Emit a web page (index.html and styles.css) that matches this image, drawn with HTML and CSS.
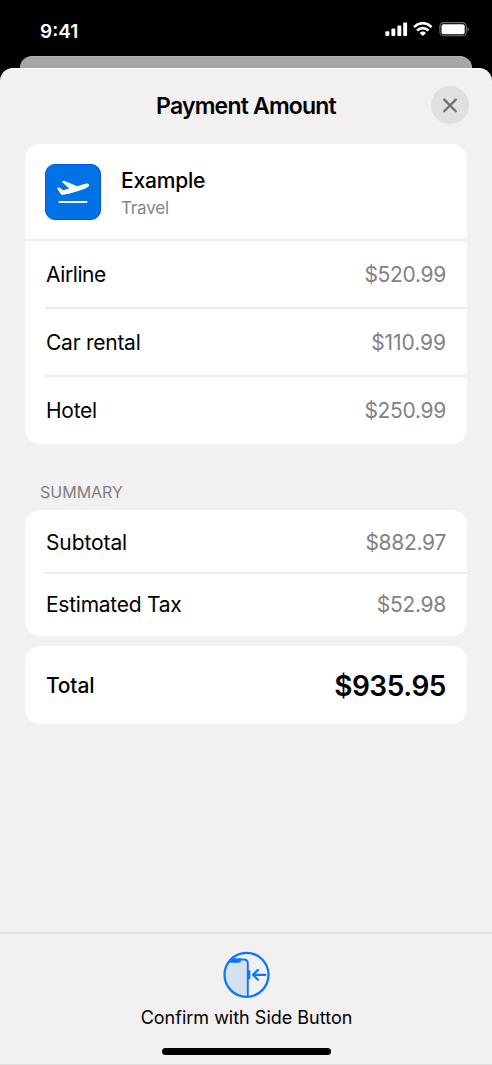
FILE: index.html
```html
<!DOCTYPE html>
<html lang="en">
<head>
<meta charset="utf-8">
<title>Payment Amount</title>
<link rel="stylesheet" href="styles.css">
</head>
<body>
<div class="phone">
  <header class="status">
    <span class="time">9:41</span>
    <svg class="indicators" width="84" height="16" viewBox="0 0 84 16">
      <g fill="#fff">
        <rect x="0.4" y="9.2" width="3.9" height="4.8" rx="1"/>
        <rect x="6.4" y="6.4" width="3.9" height="7.6" rx="1"/>
        <rect x="12.4" y="3.5" width="3.9" height="10.5" rx="1"/>
        <rect x="18.2" y="0.4" width="3.9" height="13.6" rx="1"/>
        <path d="M37.8 14 L34.6 10.900 Q37.8 8.300 41 10.900 Z"/>
      </g>
      <g fill="none" stroke="#fff" stroke-width="2.6">
        <path d="M29 4.9 Q37.8 -2.6 46.6 4.9"/>
        <path d="M32 8.5 Q37.8 3.6 43.6 8.5"/>
      </g>
      <rect x="54.9" y="0.6" width="26.4" height="13.2" rx="3.8" fill="none" stroke="#707070" stroke-width="1.1"/>
      <rect x="56.5" y="2.2" width="23.2" height="10" rx="2" fill="#fff"/>
      <path d="M82.5 5 Q84 5.7 84 7.2 Q84 8.700 82.500 9.400 Z" fill="#707070"/>
    </svg>
  </header>
  <div class="back-sheet"></div>
  <main class="sheet">
    <div class="titlebar">
      <h1 class="title">Payment Amount</h1>
      <button class="close" aria-label="Close">
        <svg width="38" height="38" viewBox="0 0 38 38"><path d="M13.2 13.600 L24.800 25.200 M24.800 13.600 L13.200 25.200" stroke="#707073" stroke-width="2.300" stroke-linecap="round"/></svg>
      </button>
    </div>
    <section class="card">
      <div class="merchant">
        <svg class="logo" width="56" height="56" viewBox="0 0 56 56">
          <rect x="0.5" y="0.5" width="55" height="55" rx="9.500" fill="#0171e6" stroke="#0058e0"/>
          <path d="M12.300 24.700 Q12 23.800 12.900 23.700 L14.400 23.500 L18.300 26.200 L24.200 24.600 L17.300 18.300 Q16.700 17.500 17.700 17.100 L19.400 16.800 L32.200 22.300 L39.200 19.900 Q43.300 18.700 44 20.600 Q44.600 22.800 40.200 24.400 C33 27 25.200 29.500 18.200 30.800 Q16.700 31 15.800 29.900 Z" fill="#fff"/>
          <path d="M14.500 38 H41.500" stroke="#fff" stroke-width="2" stroke-linecap="round"/>
        </svg>
        <div class="names">
          <div class="name">Example</div>
          <div class="kind">Travel</div>
        </div>
      </div>
      <div class="row first"><span class="tight">Airline</span><span class="price">$520.99</span></div>
      <div class="row"><span>Car rental</span><span class="price ones">$110.99</span></div>
      <div class="row"><span>Hotel</span><span class="price">$250.99</span></div>
    </section>
    <h2 class="section-title">SUMMARY</h2>
    <section class="card summary">
      <div class="row"><span class="wide">Subtotal</span><span class="price">$882.97</span></div>
      <div class="row"><span>Estimated Tax</span><span class="price">$52.98</span></div>
    </section>
    <section class="card total">
      <span class="total-label">Total</span><span class="amount">$935.95</span>
    </section>
    <footer class="confirm">
      <svg class="side-icon" width="48" height="48" viewBox="0 0 48 48">
        <defs><clipPath id="ring"><circle cx="23.500" cy="23.800" r="22"/></clipPath></defs>
        <g clip-path="url(#ring)">
          <path d="M0 8.500 H21 Q24.800 8.500 24.800 12.500 V48 H0 Z" fill="#d5e1f1" stroke="#0a76ff" stroke-width="1.900"/>
          <path d="M0 7.600 H18 V9.200 Q18 11.800 15.700 11.800 H0 Z" fill="#0a76ff"/>
        </g>
        <rect x="24.800" y="19.300" width="2.600" height="9" rx="0.800" fill="#0a76ff"/>
        <path d="M42.300 23.800 H30.200 M35 18.900 L30 23.800 L35 28.700" fill="none" stroke="#0a76ff" stroke-width="2.200" stroke-linecap="round" stroke-linejoin="round"/>
        <circle cx="23.500" cy="23.800" r="22" fill="none" stroke="#0a76ff" stroke-width="2.300"/>
      </svg>
      <div class="confirm-text">Confirm with Side Button</div>
      <div class="home-bar"></div>
    </footer>
  </main>
</div>
</body>
</html>
```
FILE: styles.css
```css
* { box-sizing: border-box; }
body { margin: 0; background: #000; font-family: Inter, "Liberation Sans", sans-serif; color: #000; }
.phone { width: 492px; height: 1065px; display: flex; flex-direction: column; overflow: hidden; }
.status { height: 56px; flex: none; display: flex; justify-content: space-between; padding: 22px 23px 0 40px; color: #fff; }
.time { font-size: 19px; font-weight: 600; line-height: 18px; letter-spacing: 0; padding-top: 1px; }
.indicators { display: block; }
.back-sheet { height: 28px; flex: none; margin: 0 20px -16px; background: #a6a6a6; border-top: 1px solid #b5b5b5; border-radius: 12px 12px 0 0; }
.sheet { flex: 1; display: flex; flex-direction: column; background: #f2f0f1; border-radius: 13px 13px 0 0; border-top: 1px solid #fff; border-bottom: 1px solid #dededf; }
.titlebar { height: 75px; flex: none; display: grid; grid-template-columns: 1fr auto 1fr; align-items: center; padding: 0 23px; }
.title { grid-column: 2; margin: 0; padding-bottom: 1px; font-size: 23px; font-weight: 600; line-height: 74px; letter-spacing: -0.8px; }
.close { justify-self: end; width: 38px; height: 38px; padding: 0; border: 0; border-radius: 50%; background: #e1e0e1; margin-top: -3px; }
.close svg { display: block; }
.card { margin: 0 25px; background: #fff; border-radius: 15px; flex: none; }
.merchant { height: 95px; display: flex; padding: 20px 20px 0; gap: 20px; }
.logo { flex: none; }
.names { padding-top: 3px; }
.name { font-size: 21px; font-weight: 500; line-height: 28px; letter-spacing: -0.2px; }
.kind { font-size: 17px; line-height: 25px; letter-spacing: -0.15px; padding-top: 1px; color: #858487; }
.row { height: 68px; margin-left: 20px; padding: 0 21px 0 1px; border-top: 2px solid #ebebec; display: flex; justify-content: space-between; align-items: center; font-size: 21px; letter-spacing: -0.25px; }
.row.first { margin-left: 0; padding-left: 21px; }
.card .row:last-child { height: 69px; padding-bottom: 1px; }
.tight { letter-spacing: -0.4px; }
.wide { letter-spacing: -0.1px; }
.price { color: #828185; letter-spacing: -0.3px; }
.ones { letter-spacing: -0.05px; }
.section-title { height: 66px; flex: none; margin: 0 40px; padding-top: 37px; font-size: 16px; font-weight: 400; line-height: 22px; color: #807f83; }
.summary .row { height: 62px; }
.summary .row:first-child { border-top-color: transparent; }
.card.summary .row:last-child { height: 64px; padding-bottom: 1px; }
.total { height: 78px; margin-top: 10px; padding: 0 21px; display: flex; justify-content: space-between; align-items: center; }
.total-label { font-size: 21px; font-weight: 500; letter-spacing: -0.2px; }
.amount { font-size: 28px; font-weight: 600; letter-spacing: -0.45px; padding-top: 1px; }
.confirm { margin-top: auto; height: 132px; border-top: 2px solid #e3e2e3; display: flex; flex-direction: column; align-items: center; padding: 17px 0 0 1px; }
.side-icon { flex: none; }
.confirm-text { font-size: 18px; line-height: 24px; margin-top: 7px; }
.home-bar { width: 169px; height: 7px; margin-top: 18px; border-radius: 4px; background: #000; }
```
